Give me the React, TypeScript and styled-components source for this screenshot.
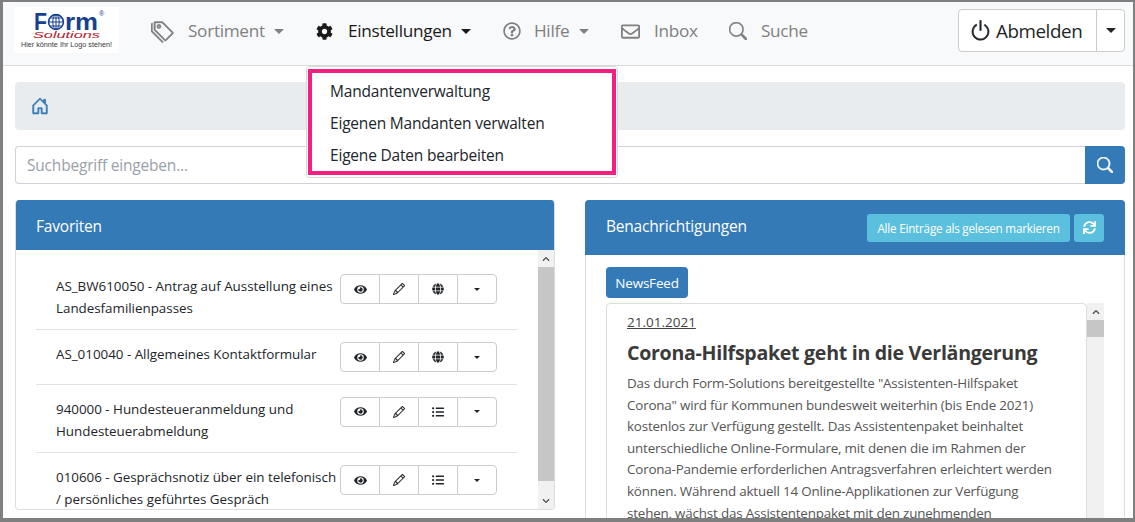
import React from 'react';
import styled, { createGlobalStyle } from 'styled-components';
import { FaCog, FaEye, FaGlobe, FaListUl, FaRegEnvelope, FaRegQuestionCircle, FaSync, FaChevronUp, FaChevronDown } from 'react-icons/fa';
import { BsTags, BsPencil, BsSearch, BsPower, BsHouseDoor } from 'react-icons/bs';

const GlobalStyle = createGlobalStyle`
    html, body {
        margin: 0;
        padding: 0;
        background: #fff;
    }
    * {
        box-sizing: border-box;
    }
`

const favorites = [
    { text: ['AS_BW610050 - Antrag auf Ausstellung eines', 'Landesfamilienpasses'], list: false },
    { text: ['AS_010040 - Allgemeines Kontaktformular'], list: false },
    { text: ['940000 - Hundesteueranmeldung und', 'Hundesteuerabmeldung'], list: true },
    { text: ['010606 - Gesprächsnotiz über ein telefonisch', '/ persönliches geführtes Gespräch'], list: true },
];

const newsLines = [
    'Das durch Form-Solutions bereitgestellte "Assistenten-Hilfspaket',
    'Corona" wird für Kommunen bundesweit weiterhin (bis Ende 2021)',
    'kostenlos zur Verfügung gestellt. Das Assistentenpaket beinhaltet',
    'unterschiedliche Online-Formulare, mit denen die im Rahmen der',
    'Corona-Pandemie erforderlichen Antragsverfahren erleichtert werden',
    'können. Während aktuell 14 Online-Applikationen zur Verfügung',
    'stehen, wächst das Assistentenpaket mit den zunehmenden',
];

const Scrollbar = (props: { width: number; thumbHeight: number }) => (
    <ScrollTrack $width={props.width}>
        <ScrollArrow><FaChevronUp /></ScrollArrow>
        <ScrollRail>
            <ScrollThumb $height={props.thumbHeight} />
        </ScrollRail>
        <ScrollArrow><FaChevronDown /></ScrollArrow>
    </ScrollTrack>
);

const Logo = () => (
    <LogoBox>
        <svg width="105" height="46" viewBox="0 0 105 46">
            <g fontFamily='"Liberation Sans", sans-serif'>
                <text x="20" y="23" fontSize="24" fontWeight="700" fill="#17408f" textLength="13" lengthAdjust="spacingAndGlyphs">F</text>
                <circle cx="42" cy="15" r="7.4" fill="#fff" stroke="#17408f" strokeWidth="1.6" />
                <ellipse cx="42" cy="15" rx="3.2" ry="7.4" fill="none" stroke="#17408f" strokeWidth="1" />
                <path d="M34.6 15h14.8M36 11h12M36 19h12M42 7.6v14.8" stroke="#17408f" strokeWidth="1" />
                <text x="51" y="23" fontSize="24" fontWeight="700" fill="#17408f" textLength="33" lengthAdjust="spacingAndGlyphs">rm</text>
                <text x="85" y="9" fontSize="7" fill="#17408f">®</text>
                <text x="19" y="31" fontSize="9.5" fontStyle="italic" fill="#b5202a" textLength="67" lengthAdjust="spacingAndGlyphs">Solutions</text>
                <text x="7" y="40" fontSize="7.5" fill="#3a3a3a" textLength="91" lengthAdjust="spacingAndGlyphs">Hier könnte Ihr Logo stehen!</text>
            </g>
        </svg>
    </LogoBox>
);

export default function App() {
    return (
        <Frame>
            <GlobalStyle />
            <Navbar>
                <Logo />
                <NavItems>
                    <NavItem $width={165}><BsTags size={23} stroke="currentColor" strokeWidth={0.35} />Sortiment<Caret /></NavItem>
                    <NavItem $active $width={187} $gap={15}><FaCog size={17} />Einstellungen<Caret $offset={-6} />
                        <Menu>
                            <Highlight>
                                <MenuItem>Mandantenverwaltung</MenuItem>
                                <MenuItem>Eigenen Mandanten verwalten</MenuItem>
                                <MenuItem>Eigene Daten bearbeiten</MenuItem>
                            </Highlight>
                        </Menu>
                    </NavItem>
                    <NavItem $width={118} $gap={13}><FaRegQuestionCircle size={18} />Hilfe<Caret $offset={-3} /></NavItem>
                    <NavItem $width={108}><FaRegEnvelope size={19} />Inbox</NavItem>
                    <NavItem><BsSearch size={18} stroke="currentColor" strokeWidth={0.5} />Suche</NavItem>
                </NavItems>
                <LogoutGroup>
                    <LogoutButton><BsPower size={23} stroke="currentColor" strokeWidth={0.4} />Abmelden</LogoutButton>
                    <LogoutCaret><Caret $offset={0} $dark /></LogoutCaret>
                </LogoutGroup>
            </Navbar>
            <Content>
                <Breadcrumb><BsHouseDoor size={18} stroke="currentColor" strokeWidth={0.6} /></Breadcrumb>
                <SearchRow>
                    <SearchInput>Suchbegriff eingeben...</SearchInput>
                    <SearchButton><BsSearch size={16} stroke="currentColor" strokeWidth={0.8} /></SearchButton>
                </SearchRow>
                <Columns>
                    <Panel>
                        <FavHeader>Favoriten</FavHeader>
                        <FavBody>
                            <FavList>
                                {favorites.map((f) => (
                                    <FavRow key={f.text[0]}>
                                        <FavText>{f.text.map((t) => <div key={t}>{t}</div>)}</FavText>
                                        <ActionGroup>
                                            <ActionCell><FaEye size={13} /></ActionCell>
                                            <ActionCell><BsPencil size={12} stroke="currentColor" strokeWidth={0.3} /></ActionCell>
                                            <ActionCell>{f.list ? <FaListUl size={12} /> : <FaGlobe size={12} />}</ActionCell>
                                            <ActionCell><Caret $offset={0} $dark $small /></ActionCell>
                                        </ActionGroup>
                                    </FavRow>
                                ))}
                            </FavList>
                            <Scrollbar width={16} thumbHeight={214} />
                        </FavBody>
                    </Panel>
                    <NewsPanel>
                        <NewsHeader>
                            <NewsHeading>Benachrichtigungen</NewsHeading>
                            <HeaderButtons>
                                <InfoButton>Alle Einträge als gelesen markieren</InfoButton>
                                <InfoButton $icon><FaSync size={13} /></InfoButton>
                            </HeaderButtons>
                        </NewsHeader>
                        <NewsBody>
                            <TabButton>NewsFeed</TabButton>
                            <NewsRow>
                                <NewsBox>
                                    <NewsDate>21.01.2021</NewsDate>
                                    <NewsTitle>Corona-Hilfspaket geht in die Verlängerung</NewsTitle>
                                    {newsLines.map((l) => <NewsLine key={l}>{l}</NewsLine>)}
                                </NewsBox>
                                <Scrollbar width={17} thumbHeight={17} />
                            </NewsRow>
                        </NewsBody>
                    </NewsPanel>
                </Columns>
            </Content>
        </Frame>
    );
}

const font = `"Open Sans", "Noto Sans", sans-serif`;

const Frame = styled.div`
    width: 1135px;
    height: 522px;
    overflow: hidden;
    border: solid #7f7f7f;
    border-width: 2px 2px 4px 3px;
    font-family: ${font};
    color: #212529;
    display: flex;
    flex-direction: column;
`

const Navbar = styled.div`
    height: 64px;
    flex: none;
    display: flex;
    align-items: center;
    background: #f8f9fa;
    border-bottom: 1px solid #dcdcdc;
    padding: 0 8px 5px 11px;
`

const LogoBox = styled.div`
    width: 105px;
    height: 46px;
    background: #fff;
    margin-top: -2px;
    flex: none;

    svg {
        display: block;
    }
`

const NavItems = styled.div`
    display: flex;
    align-items: center;
    flex: 1;
    margin-left: 32px;
`

const NavItem = styled.div<{ $active?: boolean; $width?: number; $gap?: number }>`
    position: relative;
    display: flex;
    align-items: center;
    gap: ${(p) => p.$gap ?? 14}px;
    width: ${(p) => (p.$width ? `${p.$width}px` : 'auto')};
    font-size: 17.2px;
    line-height: 26px;
    letter-spacing: -0.3px;
    color: ${(p) => (p.$active ? '#1a1a1a' : '#808080')};
    white-space: nowrap;
`

const Caret = styled.span<{ $dark?: boolean; $small?: boolean; $offset?: number }>`
    display: inline-block;
    width: 0;
    height: 0;
    margin-left: ${(p) => p.$offset ?? -5}px;
    border-top: ${(p) => (p.$small ? 3 : 5)}px solid ${(p) => (p.$dark ? '#212529' : 'currentColor')};
    border-left: ${(p) => (p.$small ? 3 : 5)}px solid transparent;
    border-right: ${(p) => (p.$small ? 3 : 5)}px solid transparent;
`

const Menu = styled.div`
    position: absolute;
    left: -10px;
    top: 48px;
    width: 312px;
    height: 112px;
    z-index: 5;
    background: #fff;
    border: 1px solid #d9d9d9;
    border-radius: 4px;
    padding: 1.5px 0 0 1px;
`

const Highlight = styled.div`
    height: 106px;
    width: 308px;
    border: 4px solid #f3207f;
    padding: 3px 0;
`

const MenuItem = styled.div`
    height: 32px;
    line-height: 30px;
    padding-left: 18px;
    font-size: 15.5px;
    letter-spacing: -0.2px;
    color: #212529;
`

const LogoutGroup = styled.div`
    display: flex;
    height: 43px;
    margin-bottom: 1px;
    background: #fff;
    border: 1px solid #ccc;
    border-radius: 4px;
`

const LogoutButton = styled.div`
    width: 138px;
    display: flex;
    align-items: center;
    gap: 4px;
    padding-left: 10px;
    font-size: 18.8px;
    letter-spacing: -0.42px;
    color: #212529;
    border-right: 1px solid #ccc;
`

const LogoutCaret = styled.div`
    width: 27px;
    display: flex;
    align-items: center;
    justify-content: center;
`

const Content = styled.div`
    flex: 1;
    min-height: 0;
    padding: 16px 8px 0 12px;
    background: #fff;
    overflow: hidden;
`

const Breadcrumb = styled.div`
    height: 48px;
    background: #e9ecef;
    border-radius: 4px;
    display: flex;
    align-items: center;
    padding-left: 16px;
    color: #337ab7;
`

const SearchRow = styled.div`
    display: flex;
    height: 38px;
    margin-top: 16px;
`

const SearchInput = styled.div`
    flex: 1;
    border: 1px solid #ced4da;
    border-right: 0;
    border-radius: 4px 0 0 4px;
    padding-left: 11px;
    line-height: 37px;
    font-size: 15.5px;
    letter-spacing: -0.2px;
    color: #9aa1a8;
`

const SearchButton = styled.div`
    width: 40px;
    background: #337ab7;
    border-radius: 0 4px 4px 0;
    color: #fff;
    display: flex;
    align-items: center;
    justify-content: center;
`

const Columns = styled.div`
    display: grid;
    grid-template-columns: 540px 540px;
    gap: 30px;
    margin-top: 16px;
    align-items: start;
`

const Panel = styled.div`
    height: 310px;
    border: 1px solid #ddd;
    border-top: 0;
    border-radius: 4px;
    display: flex;
    flex-direction: column;
    overflow: hidden;
    background: #fff;
`

const NewsPanel = styled.div`
    height: 330px;
    border-radius: 4px;
    display: flex;
    flex-direction: column;
    overflow: hidden;
    background: #fff;
`

const FavHeader = styled.div`
    height: 50px;
    flex: none;
    background: #337ab7;
    color: #fff;
    font-size: 15.5px;
    letter-spacing: -0.2px;
    line-height: 52px;
    padding-left: 20px;
`

const FavBody = styled.div`
    flex: 1;
    min-height: 0;
    display: flex;
`

const FavList = styled.div`
    flex: 1;
    min-width: 0;
    overflow: hidden;
    padding: 12px 21px 0 20px;
`

const FavRow = styled.div`
    display: flex;
    justify-content: space-between;
    align-items: flex-start;
    padding: 14px 20px 10.3px 20px;
    border-bottom: 1px solid #e2e2e2;

    &:last-child {
        border-bottom: 0;
    }
`

const FavText = styled.div`
    font-size: 13.4px;
    letter-spacing: -0.02px;
    line-height: 21.6px;
    color: #212529;
    white-space: nowrap;
`

const ActionGroup = styled.div`
    display: flex;
    flex: none;
    width: 157px;
    height: 30px;
    margin: -2px 0 1.2px;
    border: 1px solid #ccc;
    border-radius: 4px;
    background: #fff;
`

const ActionCell = styled.div`
    flex: 1;
    display: flex;
    align-items: center;
    justify-content: center;
    color: #212529;
    border-right: 1px solid #ccc;

    &:last-child {
        border-right: 0;
    }
`

const ScrollTrack = styled.div<{ $width: number }>`
    width: ${(p) => p.$width}px;
    flex: none;
    background: #f1f1f1;
    display: flex;
    flex-direction: column;
`

const ScrollArrow = styled.div`
    height: 17px;
    flex: none;
    display: flex;
    align-items: center;
    justify-content: center;
    font-size: 8px;
    color: #505050;
`

const ScrollRail = styled.div`
    flex: 1;
    min-height: 0;
`

const ScrollThumb = styled.div<{ $height: number }>`
    height: ${(p) => p.$height}px;
    background: #c6c6c6;
`

const NewsHeader = styled.div`
    height: 55px;
    flex: none;
    background: #337ab7;
    color: #fff;
    font-size: 15.5px;
    letter-spacing: -0.2px;
    padding: 0 21px;
    display: flex;
    align-items: center;
    justify-content: space-between;
`

const NewsHeading = styled.div`
    margin-bottom: 4px;
`

const HeaderButtons = styled.div`
    display: flex;
    gap: 4px;
`

const InfoButton = styled.div<{ $icon?: boolean }>`
    height: 28px;
    width: ${(p) => (p.$icon ? '30px' : '203px')};
    background: #5bc0de;
    border-radius: 3px;
    color: #fff;
    font-size: 11.7px;
    letter-spacing: -0.22px;
    display: flex;
    align-items: center;
    justify-content: center;
`

const NewsBody = styled.div`
    flex: 1;
    min-height: 0;
    padding: 12px 20px 0;
    overflow: hidden;
    border: solid #ddd;
    border-width: 0 1px;
`

const TabButton = styled.div`
    width: 82px;
    height: 31px;
    background: #337ab7;
    border-radius: 4px;
    color: #fff;
    font-size: 13.5px;
    letter-spacing: -0.2px;
    display: flex;
    align-items: center;
    justify-content: center;
`

const NewsRow = styled.div`
    display: flex;
    margin-top: 5px;
    height: 320px;
`

const NewsBox = styled.div`
    flex: 1;
    border: 1px solid #ddd;
    border-radius: 4px;
    padding: 8px 20px 0;
    color: #555;
    overflow: hidden;
`

const NewsDate = styled.div`
    font-size: 13.5px;
    line-height: 20px;
    text-decoration: underline;
    color: #444;
`

const NewsTitle = styled.div`
    font-size: 19.6px;
    font-weight: 700;
    line-height: 28px;
    margin: 7px 0 6px;
    color: #3a3a3a;
    letter-spacing: -0.3px;
    white-space: nowrap;
`

const NewsLine = styled.div`
    font-size: 13.4px;
    line-height: 21.6px;
    letter-spacing: -0.18px;
    white-space: nowrap;
`
